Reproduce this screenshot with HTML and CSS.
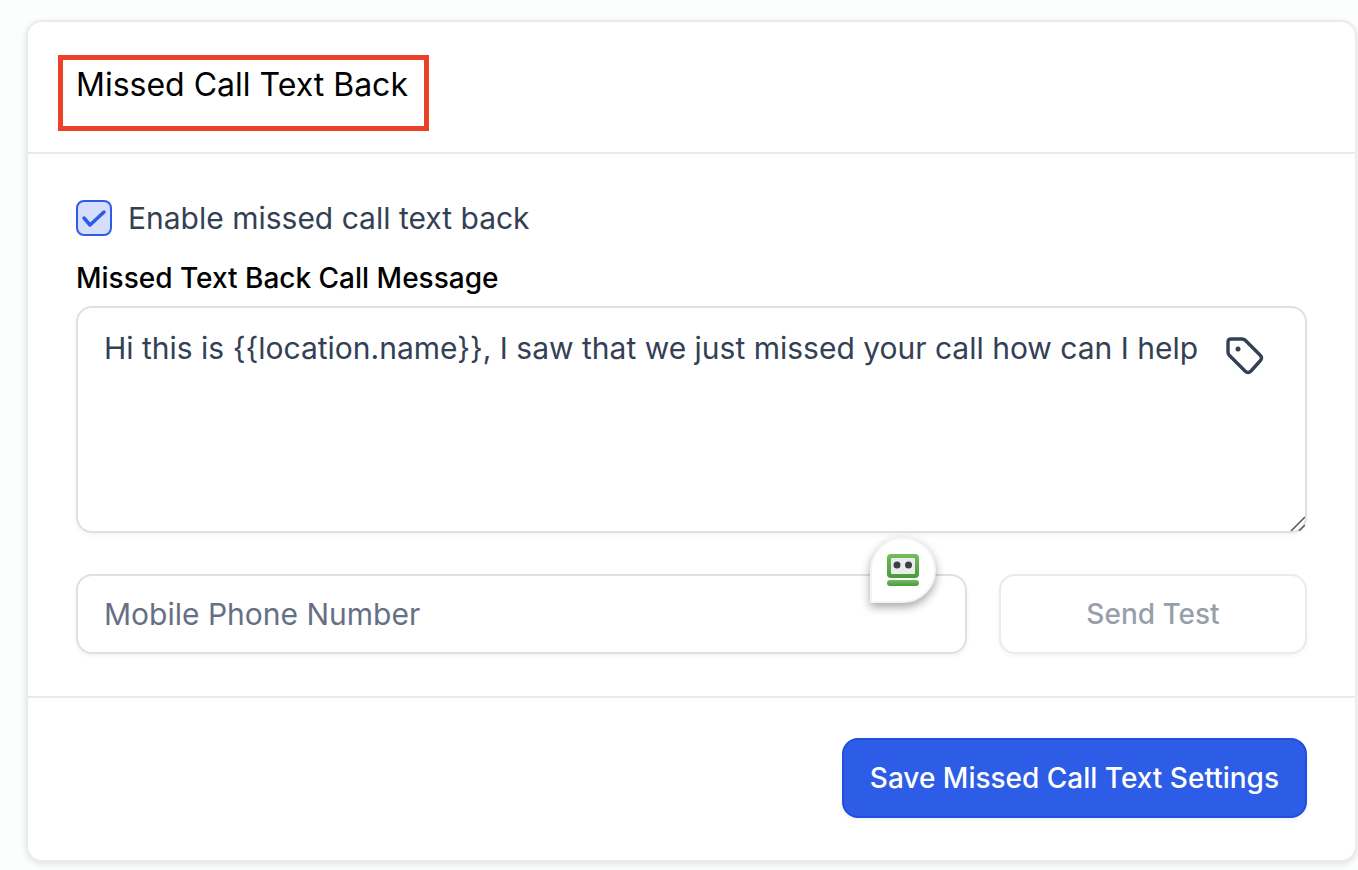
FILE: index.html
```html
<!DOCTYPE html>
<html lang="en">
<head>
  <meta charset="UTF-8" />
  <meta name="viewport" content="width=device-width, initial-scale=1.0"/>
  <title>Missed Call Text Back</title>
  <link rel="stylesheet" href="styles.css">
</head>

<body>
  <form class="card">
    <div class="card-header">
      <h1 class="card-title">Missed Call Text Back</h1>
    </div>

    <div class="card-body">
      <div class="check-row">
        <input type="checkbox" id="enable" checked />
        <label for="enable">Enable missed call text back</label>
      </div>

      <label class="field-label" for="message">Missed Text Back Call Message</label>
      <div class="message-box">
        <textarea id="message">Hi this is {{location.name}}, I saw that we just missed your call how can I help</textarea>
        <button type="button" class="tag-btn" aria-label="Insert custom value">
          <svg viewBox="0 0 40 40" width="40" height="40" fill="none" stroke="#344054" stroke-width="3.400" stroke-linejoin="round">
            <path d="M6 3h11q2 0 3 1l15 15q3 3 0 6l-9 10q-3 3-6 0L4 19q-1-1-1-3V6q0-3 3-3z"/>
            <circle cx="13" cy="13" r="2.500" fill="#344054" stroke="none"/>
          </svg>
        </button>
      </div>

      <div class="test-row">
        <div class="phone-box">
          <input type="tel" class="phone" placeholder="Mobile Phone Number" aria-label="Mobile Phone Number" />
          <div class="robo-badge">
            <svg viewBox="0 0 32 32" width="32" height="32">
              <defs>
                <linearGradient id="green" x1="0" y1="0" x2="0" y2="1">
                  <stop offset="0" stop-color="#6fbf5c"/>
                  <stop offset="1" stop-color="#4a9a3c"/>
                </linearGradient>
              </defs>
              <rect width="32" height="24" rx="4" fill="url(#green)"/>
              <rect x="4" y="4" width="24" height="16" rx="1" fill="#ececec"/>
              <circle cx="10" cy="11" r="3.500" fill="#3b4045"/>
              <circle cx="21.500" cy="11" r="3.500" fill="#3b4045"/>
              <rect y="26" width="32" height="6" rx="3" fill="url(#green)"/>
            </svg>
          </div>
        </div>
        <button type="button" class="btn btn-test" disabled>Send Test</button>
      </div>
    </div>

    <div class="card-footer">
      <button type="submit" class="btn btn-save">Save Missed Call Text Settings</button>
    </div>
  </form>
</body>
</html>
```
FILE: styles.css
```css
* { box-sizing: border-box; }
body {
  margin: 0;
  padding: 20px 1px 8px 26px;
  font-family: Inter, sans-serif;
  background-color: #fcfefd;
  color: #344054;
}
input, textarea, button { font-family: inherit; margin: 0; }

.card {
  background: #fff;
  border: 2px solid #eaebef;
  border-radius: 16px;
  box-shadow: 0 2px 6px rgba(16, 24, 40, 0.12);
}
.card-header {
  padding: 33px 30px 21px;
  border-bottom: 2px solid #eaebef;
}
.card-title {
  width: fit-content; height: 76px; margin: 0;
  padding: 5px 16px 0 13px;
  border: 5px solid #ea4228;
  font-size: 32px; line-height: 40px; font-weight: 400; color: #000;
}
.card-body { padding: 42px 48px; }

.check-row {
  display: flex; align-items: center; gap: 16px;
  font-size: 30px; line-height: 44px;
}
.check-row input {
  appearance: none;
  width: 36px; height: 36px;
  border: 2px solid #2d5ce6; border-radius: 8px;
  background: #d5dffb url("data:image/svg+xml,%3Csvg xmlns='http://www.w3.org/2000/svg' viewBox='0 0 32 32' fill='none' stroke='%232d5ce6' stroke-width='3.500' stroke-linecap='round' stroke-linejoin='round'%3E%3Cpath d='M6 16l6 7L26 10'/%3E%3C/svg%3E") center/32px no-repeat;
}
.field-label {
  display: block; margin: 16px 0 6px;
  font-size: 28px; line-height: 44px; font-weight: 500; color: #000;
}

.message-box { position: relative; }
.message-box textarea {
  display: block; width: 100%; height: 227px;
  padding: 18px 100px 18px 26px;
  border: 2px solid #dfdfe5; border-radius: 16px;
  box-shadow: 0 2px 4px rgba(16, 24, 40, 0.05);
  background: #fff; color: inherit;
  font-size: 30px; line-height: 44px;
  resize: both; outline: none;
}
.message-box textarea::-webkit-resizer {
  background: url("data:image/svg+xml,%3Csvg xmlns='http://www.w3.org/2000/svg' viewBox='0 0 15 15' stroke='%23555' stroke-width='1.500'%3E%3Cpath d='M1 15L15 1M9 15l6-6'/%3E%3C/svg%3E") center/15px no-repeat;
}
.tag-btn {
  position: absolute; top: 30px; right: 42px;
  padding: 0; border: none; background: none; cursor: pointer;
}
.tag-btn svg { display: block; }

.test-row {
  display: grid; grid-template-columns: 891fr 308fr; gap: 32px;
  margin-top: 41px;
}
.phone-box { position: relative; }
.phone {
  display: block; width: 100%; height: 80px; padding: 0 26px;
  border: 2px solid #dfdfe5; border-radius: 16px;
  box-shadow: 0 2px 4px rgba(16, 24, 40, 0.05);
  font-size: 30px; color: inherit; outline: none;
}
.phone::placeholder { color: #667085; opacity: 1; }
.robo-badge {
  position: absolute; top: -37px; right: 31px;
  width: 66px; height: 66px; padding: 17px;
  border-radius: 50% 50% 50% 0;
  background: #fff; border: 2px solid #f4f4f4;
  box-shadow: 0 4px 10px rgba(0, 0, 0, 0.35);
}
.robo-badge svg { display: block; margin: -2px; }

.btn {
  height: 80px; padding: 0 26px;
  border: 2px solid; border-radius: 16px;
  box-shadow: 0 2px 4px rgba(16, 24, 40, 0.05);
  font-size: 28px; font-weight: 500; cursor: pointer;
}
.btn-test { background: #fff; border-color: #eaeaef; color: #989fab; cursor: default; }
.btn-save { background: #2d5ce6; border-color: #1f4fe0; color: #fff; }

.card-footer {
  display: flex; justify-content: flex-end;
  padding: 40px 48px 42px;
  border-top: 2px solid #eaebef;
}
```
